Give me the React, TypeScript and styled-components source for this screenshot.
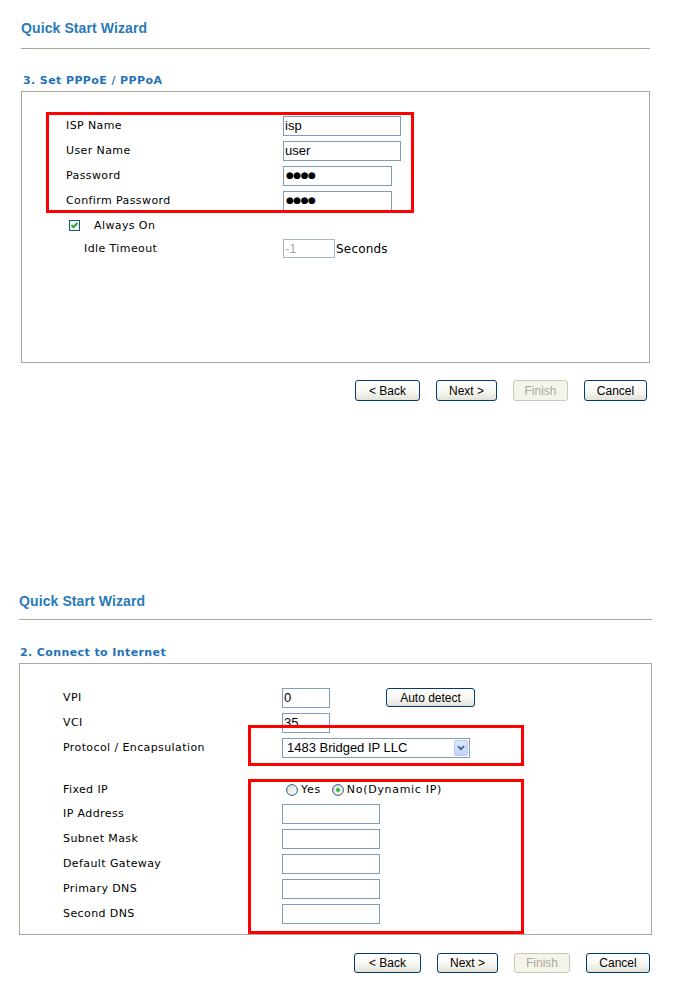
import React from "react";
import styled, { createGlobalStyle } from "styled-components";

const GlobalStyle = createGlobalStyle`
  html, body {
    margin: 0;
    padding: 0;
    background: #ffffff;
  }
  body {
    font-family: "DejaVu Sans", Verdana, sans-serif;
    color: #000000;
  }
`;

const Page = styled.div`
  width: 673px;
  height: 995px;
  overflow: hidden;
`;

const Wizard = styled.section<{ $left: number; $width: number; $top: number }>`
  margin-left: ${(p) => p.$left}px;
  width: ${(p) => p.$width}px;
  padding-top: ${(p) => p.$top}px;
`;

const WizardTitle = styled.h1`
  margin: 0;
  font: bold 14px/18px "Liberation Sans", Arial, sans-serif;
  letter-spacing: 0.1px;
  color: #2a7ab8;
`;

const Rule = styled.hr<{ $gap: number }>`
  margin: ${(p) => p.$gap}px 0 0;
  height: 0;
  border: 0;
  border-top: 1px solid #aca899;
`;

const StepTitle = styled.h2<{ $gap: number; $indent: number }>`
  margin: ${(p) => p.$gap}px 0 3px;
  padding-left: ${(p) => p.$indent}px;
  font: bold 11px/14px "DejaVu Sans", Verdana, sans-serif;
  letter-spacing: 0.4px;
  color: #1f73b7;
`;

const Panel = styled.div<{ $padLeft: number }>`
  position: relative;
  box-sizing: border-box;
  height: 272px;
  border: 1px solid #aca899;
  padding: 21px 0 0 ${(p) => p.$padLeft}px;
`;

// annotation frame drawn over the form
const Highlight = styled.div<{ $x: number; $y: number; $w: number; $h: number }>`
  position: absolute;
  left: ${(p) => p.$x}px;
  top: ${(p) => p.$y}px;
  width: ${(p) => p.$w}px;
  height: ${(p) => p.$h}px;
  box-sizing: border-box;
  border: 3px solid #ff0000;
  pointer-events: none;
`;

const Row = styled.div<{ $h?: number; $labelCol: number }>`
  display: grid;
  grid-template-columns: ${(p) => p.$labelCol}px auto;
  align-items: center;
  height: ${(p) => p.$h ?? 25}px;
`;

const Label = styled.span<{ $indent?: number }>`
  padding-left: ${(p) => p.$indent ?? 0}px;
  font-size: 11px;
  letter-spacing: 0.4px;
  white-space: nowrap;
`;

const Controls = styled.div`
  display: flex;
  align-items: center;
`;

const Field = styled.input<{ $w: number; $h?: number }>`
  box-sizing: border-box;
  width: ${(p) => p.$w}px;
  height: ${(p) => p.$h ?? 20}px;
  margin: 0;
  padding: 0 1px 1px;
  border: 1px solid #7f9db9;
  border-radius: 0;
  background: #ffffff;
  font: 13px "Liberation Sans", Tahoma, sans-serif;
  color: #000000;
  outline: none;

  &:disabled {
    border-color: #a9b6c4;
    color: #aca899;
    background: #ffffff;
  }
`;

const Secret = styled(Field)`
  font: 9px "DejaVu Sans", sans-serif;
  letter-spacing: -0.5px;
  padding-left: 2px;
`;

const Unit = styled.span`
  margin-left: 1px;
  font: 12px "DejaVu Sans", Verdana, sans-serif;
  letter-spacing: 0.2px;
`;

const CheckLine = styled.label`
  display: flex;
  align-items: center;
  gap: 14px;
  padding-left: 3px;
  font-size: 11px;
  letter-spacing: 0.4px;
  grid-column: 1 / span 2;
`;

const RadioGroup = styled.div`
  display: flex;
  align-items: center;
  padding-left: 4px;
`;

const RadioOption = styled.label<{ $gap: number }>`
  display: flex;
  align-items: center;
  gap: 3px;
  margin-right: ${(p) => p.$gap}px;
  font-size: 11px;
  letter-spacing: 0.7px;
`;

const Combo = styled.div`
  box-sizing: border-box;
  width: 188px;
  height: 20px;
  border: 1px solid #7f9db9;
  display: flex;
  align-items: center;
  justify-content: space-between;
  padding: 0 1px 0 4px;
  font: 13px "Liberation Sans", Tahoma, sans-serif;
`;

const ComboArrow = styled.span`
  width: 14px;
  height: 16px;
  box-sizing: border-box;
  border: 1px solid #b9c9ef;
  border-radius: 2px;
  background: linear-gradient(180deg, #dce6fd 0%, #c1d2fb 100%);
  display: flex;
  align-items: center;
  justify-content: center;
`;

const XpButton = styled.button<{ $w: number; $h?: number }>`
  box-sizing: border-box;
  width: ${(p) => p.$w}px;
  height: ${(p) => p.$h ?? 20}px;
  margin: 0;
  padding: 0;
  border: 1px solid #003c74;
  border-radius: 3px;
  background: linear-gradient(180deg, #ffffff 0%, #f7f7f3 55%, #e3e1d6 100%);
  font: 12px "Liberation Sans", Tahoma, sans-serif;
  color: #000000;

  &:disabled {
    border-color: #c9c7ba;
    background: #f5f4ea;
    color: #aca899;
  }
`;

const DetectButton = styled(XpButton)`
  margin-left: 56px;
`;

const ButtonBar = styled.div<{ $gap: number; $right: number }>`
  display: flex;
  justify-content: flex-end;
  gap: 16px;
  margin-top: ${(p) => p.$gap}px;
  padding-right: ${(p) => p.$right}px;
`;

const CheckIcon = () => (
  <svg width="11" height="11" viewBox="0 0 11 11">
    <rect x="0.5" y="0.5" width="10" height="10" fill="#f3f3ef" stroke="#1c5180" />
    <path d="M2.5 5.2 L4.4 7.2 L8.5 3" fill="none" stroke="#21a121" strokeWidth="1.8" />
  </svg>
);

const RadioIcon = ({ on }: { on?: boolean }) => (
  <svg width="12" height="12" viewBox="0 0 12 12">
    <defs>
      <linearGradient id="rg" x1="0" y1="0" x2="1" y2="1">
        <stop offset="0" stopColor="#dcdcd6" />
        <stop offset="1" stopColor="#ffffff" />
      </linearGradient>
    </defs>
    <circle cx="6" cy="6" r="5.4" fill="url(#rg)" stroke="#2f5a8a" strokeWidth="1" />
    {on && <circle cx="6" cy="6" r="2" fill="#35b535" />}
  </svg>
);

const Chevron = () => (
  <svg width="8" height="6" viewBox="0 0 8 6">
    <path d="M1 1.2 L4 4.2 L7 1.2" fill="none" stroke="#4d6185" strokeWidth="1.8" />
  </svg>
);

const WizardButtons = ({ gap, right, sizes, h }: { gap: number; right: number; sizes: number[]; h: number }) => (
  <ButtonBar $gap={gap} $right={right}>
    <XpButton $w={sizes[0]} $h={h}>&lt; Back</XpButton>
    <XpButton $w={sizes[1]} $h={h}>Next &gt;</XpButton>
    <XpButton $w={sizes[2]} $h={h} disabled>Finish</XpButton>
    <XpButton $w={sizes[3]} $h={h}>Cancel</XpButton>
  </ButtonBar>
);

export default function App() {
  return (
    <Page>
      <GlobalStyle />

      <Wizard $left={21} $width={629} $top={19}>
        <WizardTitle>Quick Start Wizard</WizardTitle>
        <Rule $gap={11} />
        <StepTitle $gap={25} $indent={2}>3. Set PPPoE / PPPoA</StepTitle>
        <Panel $padLeft={44}>
          <Row $labelCol={217}>
            <Label>ISP Name</Label>
            <Field $w={118} defaultValue="isp" />
          </Row>
          <Row $labelCol={217}>
            <Label>User Name</Label>
            <Field $w={118} defaultValue="user" />
          </Row>
          <Row $labelCol={217}>
            <Label>Password</Label>
            <Secret $w={109} defaultValue="●●●●" readOnly />
          </Row>
          <Row $labelCol={217}>
            <Label>Confirm Password</Label>
            <Secret $w={109} defaultValue="●●●●" readOnly />
          </Row>
          <Row $labelCol={217}>
            <CheckLine>
              <CheckIcon />
              Always On
            </CheckLine>
          </Row>
          <Row $labelCol={217} $h={21}>
            <Label $indent={18}>Idle Timeout</Label>
            <Controls>
              <Field $w={52} $h={19} defaultValue="-1" disabled />
              <Unit>Seconds</Unit>
            </Controls>
          </Row>
          <Highlight $x={24} $y={20} $w={368} $h={101} />
        </Panel>
        <WizardButtons gap={17} right={3} sizes={[65, 61, 55, 63]} h={21} />
      </Wizard>

      <Wizard $left={19} $width={633} $top={191}>
        <WizardTitle>Quick Start Wizard</WizardTitle>
        <Rule $gap={9} />
        <StepTitle $gap={26} $indent={1}>2. Connect to Internet</StepTitle>
        <Panel $padLeft={43}>
          <Row $labelCol={219}>
            <Label>VPI</Label>
            <Controls>
              <Field $w={48} defaultValue="0" />
              <DetectButton $w={89} $h={19}>Auto detect</DetectButton>
            </Controls>
          </Row>
          <Row $labelCol={219}>
            <Label>VCI</Label>
            <Field $w={48} defaultValue="35" />
          </Row>
          <Row $labelCol={219}>
            <Label>Protocol / Encapsulation</Label>
            <Combo>
              <span>1483 Bridged IP LLC</span>
              <ComboArrow>
                <Chevron />
              </ComboArrow>
            </Combo>
          </Row>
          <Row $labelCol={219} $h={18} />
          <Row $labelCol={219} $h={23}>
            <Label>Fixed IP</Label>
            <RadioGroup>
              <RadioOption $gap={11}>
                <RadioIcon />
                Yes
              </RadioOption>
              <RadioOption $gap={0}>
                <RadioIcon on />
                No(Dynamic IP)
              </RadioOption>
            </RadioGroup>
          </Row>
          <Row $labelCol={219}>
            <Label>IP Address</Label>
            <Field $w={98} />
          </Row>
          <Row $labelCol={219}>
            <Label>Subnet Mask</Label>
            <Field $w={98} />
          </Row>
          <Row $labelCol={219}>
            <Label>Default Gateway</Label>
            <Field $w={98} />
          </Row>
          <Row $labelCol={219}>
            <Label>Primary DNS</Label>
            <Field $w={98} />
          </Row>
          <Row $labelCol={219}>
            <Label>Second DNS</Label>
            <Field $w={98} />
          </Row>
          <Highlight $x={228} $y={61} $w={276} $h={41} />
          <Highlight $x={228} $y={115} $w={276} $h={155} />
        </Panel>
        <WizardButtons gap={18} right={2} sizes={[67, 61, 56, 64]} h={20} />
      </Wizard>
    </Page>
  );
}
